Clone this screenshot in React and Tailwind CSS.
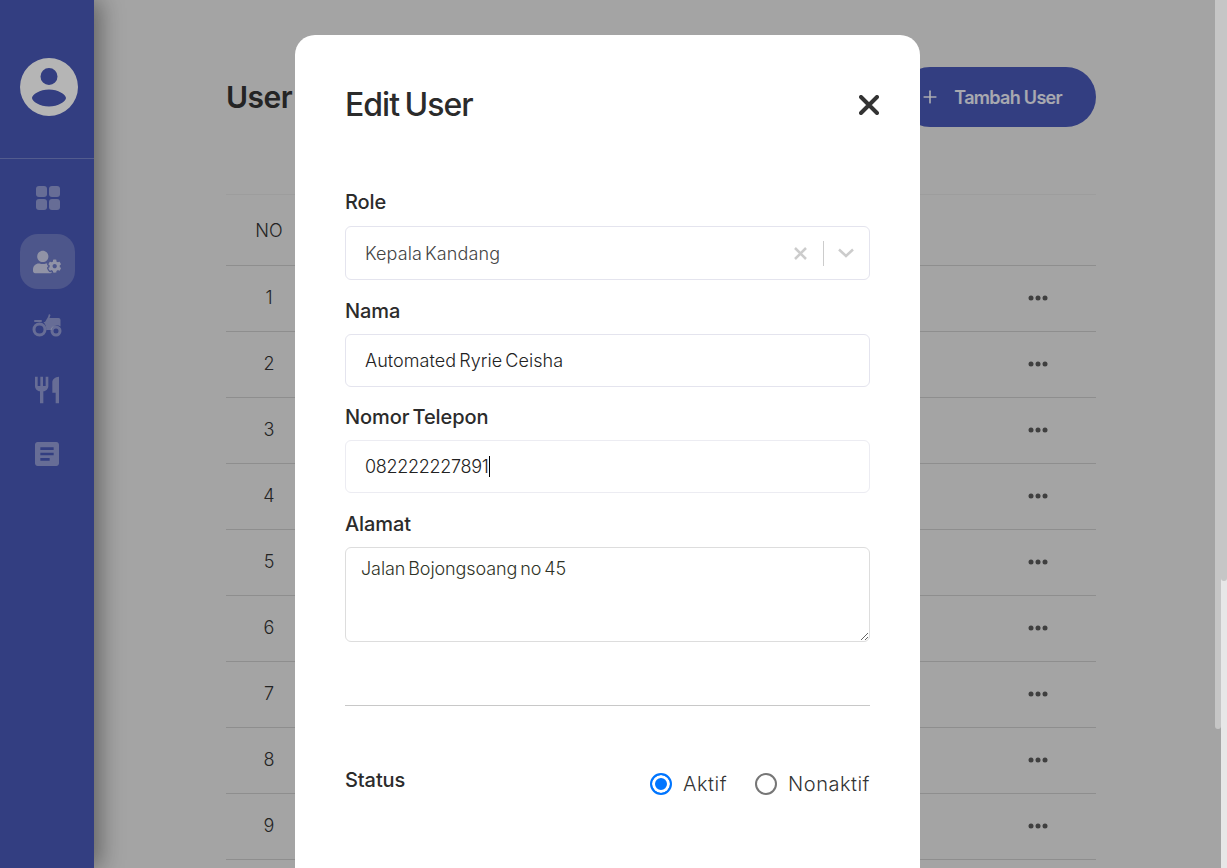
import React from 'react'
import { FaUserCog } from 'react-icons/fa'
import { MdRestaurant, MdArticle } from 'react-icons/md'
import { FiPlus } from 'react-icons/fi'

const font = { fontFamily: 'Inter, "Noto Sans", sans-serif' }

function GridIcon() {
	return (
		<svg width="24" height="24" viewBox="0 0 24 24" fill="currentColor">
			<rect x="0" y="0" width="11" height="11" rx="3" />
			<rect x="13" y="0" width="11" height="11" rx="3" />
			<rect x="0" y="13" width="11" height="11" rx="3" />
			<rect x="13" y="13" width="11" height="11" rx="3" />
		</svg>
	)
}

function Avatar() {
	return (
		<svg width="58" height="58" viewBox="0 0 58 58">
			<path fill="#ffffff" fillRule="evenodd" d="M29 0a29 29 0 1 1 0 58a29 29 0 1 1 0-58zM29 10a8.500 8.500 0 1 0 0 17a8.500 8.500 0 1 0 0-17zM29 31.500c-9 0-17 5-17 8.500s8 8.500 17 8.500s17-5 17-8.500s-8-8.500-17-8.500z" />
		</svg>
	)
}

function Tractor() {
	return (
		<svg width="30" height="24" viewBox="0 0 30 24" fill="none">
			<circle cx="7.500" cy="15.500" r="5.500" stroke="currentColor" strokeWidth="3" />
			<circle cx="24" cy="17" r="4" stroke="currentColor" strokeWidth="3" />
			<path fill="currentColor" d="M13 8l3-5 1-3 1.500 1-1 3h9a2 2 0 0 1 2 2v6.500c-1.500-1-3.500-1.500-5-1-2 .5-3.500 2-4 4.500h-5c0-3-1-6-3-8z" />
			<rect x="2" y="6" width="8" height="2" rx="1" fill="currentColor" />
		</svg>
	)
}

function Dots() {
	return (
		<svg width="20" height="6" viewBox="0 0 20 6" fill="#5a5a5a">
			<circle cx="3" cy="3" r="2.500" />
			<circle cx="10" cy="3" r="2.500" />
			<circle cx="17" cy="3" r="2.500" />
		</svg>
	)
}

function Label({ children }) {
	return <label className="block text-[20px] leading-[24px] font-medium text-[#2b2b2b] tracking-[-0.1px] [word-spacing:-2px]">{children}</label>
}

export default function App() {
	const rows = [1, 2, 3, 4, 5, 6, 7, 8, 9]

	return (
		<div className="relative flex h-screen overflow-hidden bg-[#e7e7e7]" style={font}>
			<aside className="w-[94px] shrink-0 bg-[#4958b6] shadow-[6px_0_22px_rgba(0,0,0,0.4)] z-10">
				<div className="h-[159px] border-b border-white/25 flex justify-center pt-[58px] pl-[3px]">
					<Avatar />
				</div>
				<nav className="flex flex-col items-center pt-[11px] text-white/40">
					<div className="w-[55px] h-[55px] pl-[1px] flex items-center justify-center"><GridIcon /></div>
					<div className="mt-[9px] w-[55px] h-[55px] rounded-[18px] bg-white/20 text-white/65 flex items-center justify-center"><FaUserCog size={28} /></div>
					<div className="mt-[9px] w-[55px] h-[55px] flex items-center justify-center"><Tractor /></div>
					<div className="mt-[9px] w-[55px] h-[55px] flex items-center justify-center"><MdRestaurant size={32} /></div>
					<div className="mt-[9px] w-[55px] h-[55px] flex items-center justify-center"><MdArticle size={32} /></div>
				</nav>
			</aside>

			<main className="flex-1 pl-[132px] pr-[131px] pt-[67px]">
				<div className="flex items-center justify-between h-[60px]">
					<h1 className="text-[30px] font-semibold text-[#333333] tracking-[-0.5px] mt-[1px]">User</h1>
					<button className="w-[196px] h-[60px] rounded-full bg-[#4958b6] text-white/90 flex items-center justify-end pr-[34px] gap-[14px] text-[18px] font-semibold tracking-[-0.7px]">
						<FiPlus size={20} /> Tambah User
					</button>
				</div>
				<table className="w-full mt-[67px] border-t border-[#dedede]">
					<thead>
						<tr className="h-[71px] border-b border-[#c9c9c9]">
							<th className="w-[86px] text-center text-[18px] font-light text-[#333333]">NO</th>
							<th></th>
						</tr>
					</thead>
					<tbody>
						{rows.map(no => (
							<tr key={no} className="h-[66px] border-b border-[#c9c9c9]">
								<td className="text-center text-[18px] font-light text-[#333333] pb-[2px]">{no}</td>
								<td className="text-right pr-[48px] pb-[4px]"><span className="inline-block align-middle"><Dots /></span></td>
							</tr>
						))}
					</tbody>
				</table>
			</main>

			<div className="absolute top-0 bottom-0 left-0 right-[6px] z-20 bg-black/[0.29] flex justify-center pr-[6px] pt-[35px]">
				<div className="w-[625px] h-[1000px] shrink-0 bg-white rounded-[20px] px-[50px] pt-[48px]">
					<div className="flex items-center justify-between h-[44px]">
						<h2 className="text-[32px] font-medium text-[#2b2b2b] tracking-[-1px] [word-spacing:-2px]">Edit User</h2>
						<svg width="20" height="20" viewBox="0 0 20 20" className="mr-[-9px]" stroke="#333333" strokeWidth="4" strokeLinecap="round">
							<path d="M2 2l16 16M18 2L2 18" />
						</svg>
					</div>

					<div className="mt-[63px]"><Label>Role</Label></div>
					<div className="mt-[12px] h-[54px] rounded-[6px] border border-[#e4e4ee] pl-[19px] pr-[14px] flex items-center text-[18px] font-light text-[#444444] tracking-[0.1px] [word-spacing:-2px]">
						<span className="flex-1">Kepala Kandang</span>
						<svg width="13" height="13" viewBox="0 0 13 13" stroke="#cccccc" strokeWidth="2.500"><path d="M1 1l11 11M12 1L1 12" /></svg>
						<span className="ml-[16px] w-px h-[25px] bg-[#cccccc]"></span>
						<svg width="16" height="10" viewBox="0 0 16 10" className="ml-[14px] mr-[1px]" fill="none" stroke="#cccccc" strokeWidth="2.500"><path d="M1 1.500l7 6.500l7-6.500" /></svg>
					</div>

					<div className="mt-[19px]"><Label>Nama</Label></div>
					<div className="mt-[11px] h-[53px] rounded-[6px] border border-[#e4e4ee] pl-[19px] flex items-center text-[18px] font-light text-[#222222] tracking-[0.05px] [word-spacing:-2px]">Automated Ryrie Ceisha</div>

					<div className="mt-[18px]"><Label>Nomor Telepon</Label></div>
					<div className="mt-[11px] h-[53px] rounded-[6px] border border-[#ececf2] pl-[19px] flex items-center text-[18px] font-light text-[#222222] tracking-[-0.3px]">
						082222227891<span className="w-px h-[21px] bg-black"></span>
					</div>

					<div className="mt-[19px]"><Label>Alamat</Label></div>
					<textarea readOnly defaultValue="Jalan Bojongsoang no 45" className="block mt-[11px] w-full h-[95px] rounded-[6px] border border-[#dddddd] px-[15px] py-[8px] text-[18px] font-light leading-[26px] text-[#2f3327] tracking-[-0.1px] [word-spacing:-2px] outline-none" />

					<hr className="mt-[63px] border-t border-[#c8c8c8]" />

					<div className="mt-[62px] flex justify-between">
						<Label>Status</Label>
						<div className="flex items-center gap-[28px] text-[20px] font-light text-[#333333] tracking-[0.5px] mt-[1px]">
							<label className="flex items-center gap-[11px]"><input type="radio" name="status" defaultChecked readOnly className="appearance-none w-[22px] h-[22px] m-0 rounded-full border-2 border-[#767676] checked:border-[#0075ff] checked:bg-[#0075ff] checked:shadow-[inset_0_0_0_3px_#ffffff]" />Aktif</label>
							<label className="flex items-center gap-[11px]"><input type="radio" name="status" readOnly className="appearance-none w-[22px] h-[22px] m-0 rounded-full border-2 border-[#767676] checked:border-[#0075ff] checked:bg-[#0075ff] checked:shadow-[inset_0_0_0_3px_#ffffff]" />Nonaktif</label>
						</div>
					</div>
				</div>
			</div>

			<div className="absolute top-0 right-[6px] w-[6px] h-[729px] rounded-b-[3px] bg-[#c6c6c6] z-30"></div>
			<div className="absolute top-0 right-0 w-[6px] h-[581px] rounded-b-[3px] bg-[#c6c6c6] z-30"></div>
		</div>
	)
}
